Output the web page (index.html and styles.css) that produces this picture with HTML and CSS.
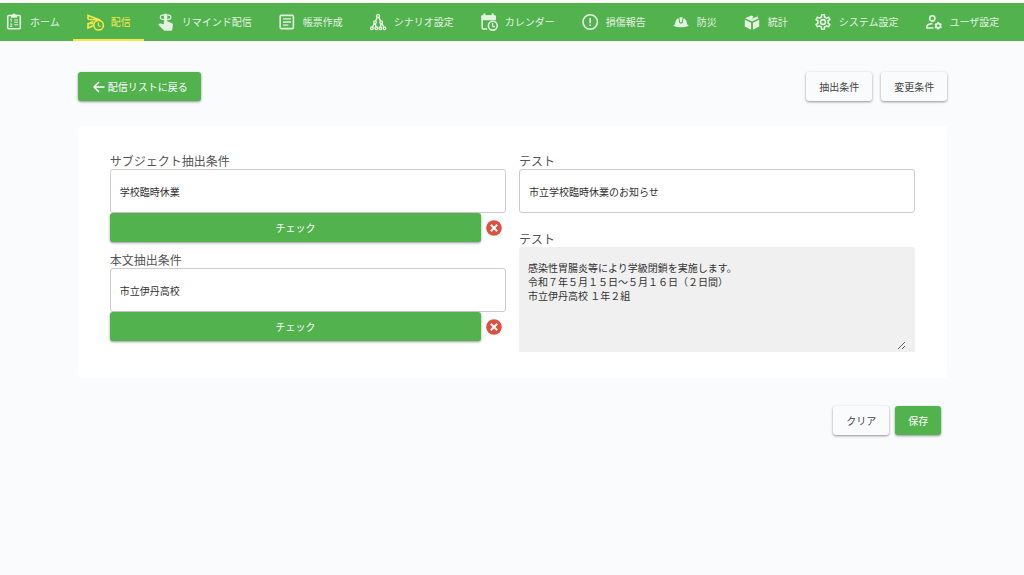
FILE: index.html
```html
<!DOCTYPE html>
<html lang="ja">
<head>
<meta charset="UTF-8" />
<meta name="viewport" content="width=device-width, initial-scale=1" />
<title>配信</title>
<link rel="stylesheet" href="styles.css">
</head>
<body>

<nav class="navbar">
  <a class="tab" href="#home">
    <svg class="icon" viewBox="0 0 16 16"><g fill="none" stroke="currentColor"><rect x="1.7" y="1.5" width="12.6" height="13.3" rx="1" stroke-width="1.6"/><path d="M8.3 6H12M8.3 8.3H12M8.3 10.8H12" stroke-width="1.1"/><path d="M4.2 5.3L5.2 4.8V8M4 10.2Q5.2 9.2 6 10.2Q6.2 11 4.2 12.4H6.3" stroke-width=".9"/></g><path d="M5 3.8V.8H6.2Q8-2 9.8.8H11V3.8Z" fill="currentColor"/></svg>
    ホーム
  </a>
  <a class="tab active" href="#delivery">
    <svg class="icon" viewBox="0 0 16 16"><g fill="none" stroke="currentColor" stroke-width="1.6"><path d="M1 5.2V1.4L13 6L1 5.2"/><path d="M6.5 7.6L1 9.8V14L6.2 11.8"/><path d="M1 9.8L6 9.6" stroke-width="1.2"/><circle cx="11.6" cy="11.2" r="4.8"/><path d="M11.4 8.5V11.4L13.5 12.7" stroke-width="1.2"/></g></svg>
    配信
  </a>
  <a class="tab" href="#remind">
    <svg class="icon" viewBox="0 0 16 16"><path d="M5.9 1.2Q5.9-.6 7.6-.6T9.3 1.2V7.2L14 9.3Q15 9.8 14.9 11L14.3 15.4Q14.1 16.8 12.7 16.8H7Q6.2 16.8 5.7 16.3L.3 10.8L1.2 9.8Q1.8 9.3 2.6 9.5L5.9 10.3Z" fill="currentColor"/><path d="M6 5.5Q2.3 5.5 2.3 3.2T6 .9M9.2.9Q12.9.9 12.9 3.2T9.2 5.5" fill="none" stroke="currentColor" stroke-width="1.2"/></svg>
    リマインド配信
  </a>
  <a class="tab" href="#forms">
    <svg class="icon" viewBox="0 0 16 16"><g fill="none" stroke="currentColor" stroke-width="1.6"><rect x="1.2" y="1.4" width="13.2" height="13.2" rx="1"/><path d="M4 4.9H12M4 8H12M4 11.1H9.3" stroke-width="1.4"/></g></svg>
    帳票作成
  </a>
  <a class="tab" href="#scenario">
    <svg class="icon" viewBox="0 0 16 16"><g fill="none" stroke="currentColor" stroke-width="1.4"><circle cx="8" cy="2" r="1.5"/><circle cx="5" cy="8.2" r="1.3"/><circle cx="11.2" cy="8.2" r="1.3"/><circle cx="1.9" cy="14.3" r="1.3"/><circle cx="6.3" cy="14.3" r="1.3"/><circle cx="10.3" cy="14.3" r="1.3"/><circle cx="14.5" cy="14.3" r="1.3"/><path d="M7.3 3.4L5.6 6.9M8.7 3.4L10.6 6.9M4.4 9.4L2.5 13M5.3 9.5L6 13M10.9 9.5L10.5 13M11.8 9.4L13.9 13"/></g></svg>
    シナリオ設定
  </a>
  <a class="tab" href="#calendar">
    <svg class="icon" viewBox="0 0 16 16"><g fill="none" stroke="currentColor" stroke-width="1.6"><path d="M6 15H2.2Q1.2 15 1.2 14V2.3H14V6"/><circle cx="11.8" cy="11.7" r="4.4"/><path d="M11.6 9V11.9L13.7 13.1" stroke-width="1.3"/></g><path d="M.4 6.2V2.7Q.4 1.2 2 1.2H2.4V-.6H4.4V1.2H10.7V-.6H12.7V1.2H13.2Q14.8 1.2 14.8 2.8V6.2Z" fill="currentColor"/></svg>
    カレンダー
  </a>
  <a class="tab" href="#damage">
    <svg class="icon" viewBox="0 0 16 16"><circle cx="8.2" cy="8" r="7.2" fill="none" stroke="currentColor" stroke-width="1.6"/><path d="M7.4 4H9V9.2H7.4ZM7.4 10.5H9V12.1H7.4Z" fill="currentColor"/></svg>
    損傷報告
  </a>
  <a class="tab" href="#disaster">
    <svg class="icon" viewBox="0 0 16 16"><path d="M.4 12Q.2 11.4.9 11.2L1.8 10.4Q2.2 5.6 5.4 4L6.2 8.6L7 9.4H9L9.8 8.6L10.6 4Q13.8 5.6 14.2 10.4L15.1 11.2Q15.8 11.4 15.6 12Q12.5 13.2 8 13.2T.4 12Z" fill="currentColor"/><path d="M6.4 3.3H9.6L8.9 8.2H7.1Z" fill="currentColor"/></svg>
    防災
  </a>
  <a class="tab" href="#stats">
    <svg class="icon" viewBox="0 0 16 16"><path d="M1 4.2L7.3 1.6L9.4 2.5L8 4.8L11 3.2L12.6 3.1L14.2 1L13.4 3.5L14.8 4.2L8 7.4ZM.8 5.7L7.1 8.7V15.7L.8 12.6ZM15.2 5.7L8.9 8.7V15.7L15.2 12.6Z" fill="currentColor"/></svg>
    統計
  </a>
  <a class="tab" href="#system">
    <svg class="icon" viewBox="2 2 20 20"><path d="M12,8A4,4 0 0,1 16,12A4,4 0 0,1 12,16A4,4 0 0,1 8,12A4,4 0 0,1 12,8M12,10A2,2 0 0,0 10,12A2,2 0 0,0 12,14A2,2 0 0,0 14,12A2,2 0 0,0 12,10M10,22C9.75,22 9.54,21.82 9.5,21.58L9.13,18.93C8.5,18.68 7.96,18.34 7.44,17.94L4.95,18.95C4.73,19.03 4.46,18.95 4.34,18.73L2.34,15.27C2.21,15.05 2.27,14.78 2.46,14.63L4.57,12.97L4.5,12L4.57,11L2.46,9.37C2.27,9.22 2.21,8.95 2.34,8.73L4.34,5.27C4.46,5.05 4.73,4.96 4.95,5.05L7.44,6.05C7.96,5.66 8.5,5.32 9.13,5.07L9.5,2.42C9.54,2.18 9.75,2 10,2H14C14.25,2 14.46,2.18 14.5,2.42L14.87,5.07C15.5,5.32 16.04,5.66 16.56,6.05L19.05,5.05C19.27,4.96 19.54,5.05 19.66,5.27L21.66,8.73C21.79,8.95 21.73,9.22 21.54,9.37L19.43,11L19.5,12L19.43,13L21.54,14.63C21.73,14.78 21.79,15.05 21.66,15.27L19.66,18.73C19.54,18.95 19.27,19.04 19.05,18.95L16.56,17.95C16.04,18.34 15.5,18.68 14.87,18.93L14.5,21.58C14.46,21.82 14.25,22 14,22H10M11.25,4L10.88,6.61C9.68,6.86 8.62,7.5 7.85,8.39L5.44,7.35L4.69,8.65L6.8,10.2C6.4,11.37 6.4,12.64 6.8,13.8L4.68,15.36L5.43,16.66L7.86,15.62C8.63,16.5 9.68,17.14 10.87,17.38L11.24,20H12.76L13.13,17.39C14.32,17.14 15.37,16.5 16.14,15.62L18.57,16.66L19.32,15.36L17.2,13.81C17.6,12.64 17.6,11.37 17.2,10.2L19.31,8.65L18.56,7.35L16.15,8.39C15.38,7.5 14.32,6.86 13.12,6.62L12.75,4H11.25Z" fill="currentColor"/></svg>
    システム設定
  </a>
  <a class="tab" href="#users">
    <svg class="icon" viewBox="0 0 16 16"><g fill="none" stroke="currentColor" stroke-width="1.6"><circle cx="7.3" cy="4.4" r="2.6"/><path d="M8.5 14H1.9V12.3Q2.6 9.8 7.5 9.6"/><circle cx="13.2" cy="11.8" r="2.2" stroke-width="1.8"/><path d="M13.2 8V9.4M13.2 14.2V15.6M9.9 9.9L11.1 10.6M15.3 13L16.5 13.7M9.9 13.7L11.1 13M15.3 10.6L16.5 9.9" stroke-width="1.7"/></g></svg>
    ユーザ設定
  </a>
</nav>

<main class="container">
  <div class="toolbar">
    <button class="btn btn-green" type="button">
      <svg class="arrow" viewBox="0 0 12 12"><path d="M11.5 6H1.2M6 1L1 6L6 11" fill="none" stroke="currentColor" stroke-width="1.5"/></svg>
      配信リストに戻る
    </button>
    <div class="toolbar-right">
      <button class="btn" type="button">抽出条件</button>
      <button class="btn" type="button">変更条件</button>
    </div>
  </div>

  <form class="card" id="conditionForm">
    <div class="column">
      <div class="field">
        <label for="subjectCond">サブジェクト抽出条件</label>
        <input type="text" id="subjectCond" value="学校臨時休業">
        <div class="check-row">
          <button class="btn btn-green btn-check" type="button">チェック</button>
          <svg class="ng" viewBox="0 0 16 16" role="img" aria-label="NG"><circle cx="8" cy="8" r="7.8" fill="#e04e3e"/><path d="M4.8 4.8L11.2 11.2M11.2 4.8L4.8 11.2" stroke="#fff" stroke-width="2"/></svg>
        </div>
      </div>
      <div class="field">
        <label for="bodyCond">本文抽出条件</label>
        <input type="text" id="bodyCond" value="市立伊丹高校">
        <div class="check-row">
          <button class="btn btn-green btn-check" type="button">チェック</button>
          <svg class="ng" viewBox="0 0 16 16" role="img" aria-label="NG"><circle cx="8" cy="8" r="7.8" fill="#e04e3e"/><path d="M4.8 4.8L11.2 11.2M11.2 4.8L4.8 11.2" stroke="#fff" stroke-width="2"/></svg>
        </div>
      </div>
    </div>
    <div class="column column-test">
      <div class="field">
        <label for="subjectTest">テスト</label>
        <input type="text" id="subjectTest" value="市立学校臨時休業のお知らせ">
      </div>
      <div class="field">
        <label for="bodyTest">テスト</label>
        <div class="textarea-box">
          <textarea id="bodyTest">感染性胃腸炎等により学級閉鎖を実施します。
令和７年５月１５日〜５月１６日（２日間）
市立伊丹高校 １年２組</textarea>
        </div>
      </div>
    </div>
  </form>

  <div class="actions">
    <button class="btn" type="reset" form="conditionForm">クリア</button>
    <button class="btn btn-green" type="submit" form="conditionForm">保存</button>
  </div>
</main>

</body>
</html>
```
FILE: styles.css
```css
* {
  box-sizing: border-box;
}
body {
  margin: 0;
  border-top: 3px solid #fff;
  background: #fafbfd;
  color: #333;
  font-family: "Noto Sans CJK JP", sans-serif;
  font-size: 10px;
}
button, input, textarea {
  font: inherit;
  color: inherit;
}

/* navbar */
.navbar {
  display: flex;
  height: 38px;
  padding-right: 8px;
  background: #52b24e;
  overflow: hidden;
}
.tab {
  display: flex;
  flex: none;
  align-items: center;
  gap: 8px;
  padding: 1px 13px 0 14px;
  border-bottom: 2px solid transparent;
  color: #e3f3e2;
  text-decoration: none;
  white-space: nowrap;
}
.tab:first-child {
  padding-left: 6px;
}
.tab.active {
  color: #f4e84c;
  border-bottom-color: #f4e84c;
}
.icon {
  width: 16px;
  height: 16px;
  overflow: visible;
}

/* page */
.container {
  width: 85%;
  margin: 0 auto;
  padding: 31px 0 24px 1px;
}
.toolbar, .toolbar-right, .actions {
  display: flex;
}
.toolbar {
  justify-content: space-between;
}
.toolbar-right {
  gap: 9px;
}
.btn {
  display: flex;
  align-items: center;
  justify-content: center;
  height: 29px;
  padding: 0 13px;
  border: none;
  border-radius: 3px;
  background: #fafbfd;
  box-shadow: 0 1px 3px rgba(0, 0, 0, 0.25), 0 1px 2px rgba(0, 0, 0, 0.2);
  color: #444;
  cursor: pointer;
}
.btn-green {
  background: #52b24e;
  color: #fff;
}
.arrow {
  width: 12px;
  height: 12px;
  margin: 0 3px 0 2px;
}

/* form */
.card {
  display: grid;
  grid-template-columns: 1fr 1fr;
  gap: 13px;
  margin-top: 25px;
  padding: 26px 32px;
  border-radius: 4px;
  background: #fff;
}
.column {
  display: flex;
  flex-direction: column;
  gap: 9px;
}
.column-test {
  gap: 17px;
}
label {
  display: block;
  font-size: 12px;
  line-height: 17px;
  color: #555;
}
input {
  display: block;
  width: 100%;
  height: 44px;
  padding: 0 9px;
  border: 1px solid #ccc;
  border-radius: 3px;
  background: #fff;
}
.check-row {
  display: flex;
  align-items: center;
  gap: 5px;
  padding-right: 4px;
}
.btn-check {
  flex: 1;
}
.ng {
  width: 16px;
  height: 16px;
}
.textarea-box {
  padding: 14px 9px 2px;
  border-radius: 3px 3px 0 0;
  background: #f0f0f0;
}
textarea {
  display: block;
  width: 100%;
  height: 89px;
  padding: 0;
  border: none;
  background: transparent;
  line-height: 14px;
  resize: both;
}
.actions {
  justify-content: flex-end;
  gap: 6px;
  margin-top: 28px;
  padding-right: 6px;
}
```
